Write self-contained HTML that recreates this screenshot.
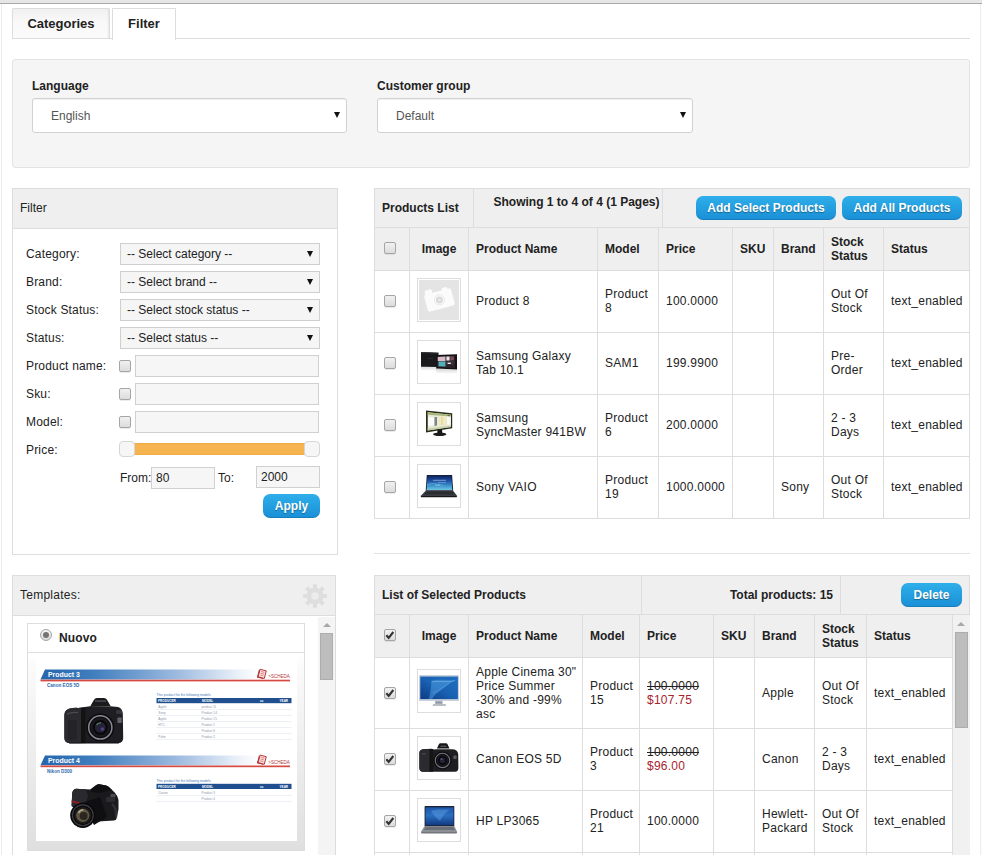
<!DOCTYPE html>
<html>
<head>
<meta charset="utf-8">
<title>Filter</title>
<style>
*{box-sizing:border-box;margin:0;padding:0}
html,body{width:982px;height:855px;overflow:hidden;background:#fff}
body{font-family:"Liberation Sans",sans-serif;font-size:12px;color:#222;position:relative}
.abs{position:absolute}
.topbar{left:0;top:0;width:982px;height:3px;background:#e6e6e6}
.topline{left:0;top:3px;width:982px;height:1px;background:#a9a9a9}
.leftbar{left:1px;top:4px;width:1px;height:851px;background:#ececec}
.rightbar{left:980px;top:4px;width:2px;height:851px;background:#fcfcfc;border-left:1px solid #eeeeee}
/* tabs */
.tab{top:8px;height:31px;border:1px solid #ddd;border-bottom:none;border-radius:1px 1px 0 0;font-weight:bold;font-size:13px;color:#222;text-align:center;line-height:29px}
.tab.cat{left:12px;width:98px;background:linear-gradient(#f0f0f0,#f8f8f8 40%,#fbfbfb);box-shadow:inset -2px 0 2px -1px rgba(0,0,0,.07);border-bottom:1px solid #ddd;height:31px}
.tab.fil{left:112px;width:64px;background:#fff;height:32px}
.tabline{left:12px;top:38px;width:958px;height:1px;background:#ddd}
/* language panel */
.lpanel{left:12px;top:59px;width:958px;height:109px;background:#f5f5f5;border:1px solid #e3e3e3;border-radius:3px}
.lbl{font-weight:bold;font-size:12px;color:#222}
.bigsel{height:35px;width:315px;background:#fff;border:1px solid #d2d2d2;border-radius:3px;font-size:12px;color:#555;line-height:35px;padding-left:18px;box-shadow:inset 0 1px 1px rgba(0,0,0,.06)}
.arr{position:absolute;width:0;height:0;border-left:3px solid transparent;border-right:3px solid transparent;border-top:6px solid #111}
/* generic panel */
.panel{border:1px solid #ddd;background:#fff}
.phead{background:#efefef;border-bottom:1px solid #ddd}
/* filter rows */
.flabel{left:26px;font-size:12px;color:#222;line-height:14px;letter-spacing:.18px}
.fsel{left:120px;width:200px;height:22px;background:#f5f5f5;border:1px solid #cfcfcf;font-size:12px;line-height:20px;padding-left:6px;color:#222}
.finp{left:135px;width:184px;height:22px;background:#f6f6f6;border:1px solid #d0d0d0}
.cb{width:12px;height:12px;border:1px solid #a6a6a6;border-radius:2px;background:linear-gradient(#f1f1f1,#dcdcdc);box-shadow:0 1px 0 rgba(0,0,0,.08)}
.cb{position:relative}
.abs.cb{position:absolute}
.cb.ck svg{position:absolute;left:-1px;top:-1px;width:12px;height:12px}
th .cb{top:-1px}
.btn{background:linear-gradient(#2eafea,#1a8fd6);color:#fff;font-weight:bold;font-size:12px;text-align:center;border-radius:7px;text-shadow:0 1px 1px rgba(0,0,0,.35);box-shadow:inset 0 -1px 0 rgba(0,0,0,.12)}
/* tables */
table{border-collapse:collapse;table-layout:fixed;font-size:12px;color:#222}
td,th{border:1px solid #ddd;vertical-align:middle;text-align:left;padding:0 0 0 7px;line-height:14px;font-weight:normal}
td{padding-bottom:1px;letter-spacing:.25px}
tr.r71 td{padding-bottom:0}
th{background:#efefef;font-weight:bold}
.thumb{display:block;width:44px;height:44px;border:1px solid #ddd;padding:1px;background:#fff;position:absolute}
.thumb svg{display:block;width:40px;height:40px}
.old{text-decoration:line-through;color:#222}
.new{color:#a8232d}
</style>
</head>
<body>
<div class="abs topbar"></div><div class="abs topline"></div>
<div class="abs leftbar"></div><div class="abs rightbar"></div>

<!-- tabs -->
<div class="abs tabline"></div>
<div class="abs tab cat">Categories</div>
<div class="abs tab fil">Filter</div>

<!-- language panel -->
<div class="abs lpanel"></div>
<div class="abs lbl" style="left:32px;top:79px">Language</div>
<div class="abs bigsel" style="left:32px;top:98px">English</div>
<div class="arr" style="left:334px;top:112px"></div>
<div class="abs lbl" style="left:377px;top:79px">Customer group</div>
<div class="abs bigsel" style="left:377px;top:98px;width:316px">Default</div>
<div class="arr" style="left:680px;top:112px"></div>

<!-- FILTER PANEL -->
<div class="abs panel" style="left:12px;top:188px;width:326px;height:367px"></div>
<div class="abs phead" style="left:13px;top:189px;width:324px;height:40px"></div>
<div class="abs" style="left:20px;top:201px;font-size:12px">Filter</div>


<div class="abs flabel" style="top:247px">Category:</div>
<div class="abs fsel" style="top:243px">-- Select category --</div><div class="arr" style="left:307px;top:251px"></div>
<div class="abs flabel" style="top:275px">Brand:</div>
<div class="abs fsel" style="top:271px">-- Select brand --</div><div class="arr" style="left:307px;top:279px"></div>
<div class="abs flabel" style="top:303px">Stock Status:</div>
<div class="abs fsel" style="top:299px">-- Select stock status --</div><div class="arr" style="left:307px;top:307px"></div>
<div class="abs flabel" style="top:331px">Status:</div>
<div class="abs fsel" style="top:327px">-- Select status --</div><div class="arr" style="left:307px;top:335px"></div>
<div class="abs flabel" style="top:359px">Product name:</div>
<div class="abs cb" style="left:119px;top:360px"></div><div class="abs finp" style="top:355px"></div>
<div class="abs flabel" style="top:387px">Sku:</div>
<div class="abs cb" style="left:119px;top:388px"></div><div class="abs finp" style="top:383px"></div>
<div class="abs flabel" style="top:415px">Model:</div>
<div class="abs cb" style="left:119px;top:416px"></div><div class="abs finp" style="top:411px"></div>
<div class="abs flabel" style="top:443px">Price:</div>
<div class="abs" style="left:127px;top:443px;width:185px;height:12px;background:#f6b450;border-top:1px solid #f0ab45;border-bottom:1px solid #f0ab45"></div>
<div class="abs" style="left:119px;top:441px;width:16px;height:16px;border:1px solid #d6d6d6;border-radius:4px;background:#f6f6f6"></div>
<div class="abs" style="left:304px;top:441px;width:16px;height:16px;border:1px solid #d6d6d6;border-radius:4px;background:#f6f6f6"></div>
<div class="abs" style="left:120px;top:471px;font-size:12px">From:</div>
<div class="abs finp" style="left:151px;top:467px;width:64px;padding-left:4px;line-height:20px;font-size:12px">80</div>
<div class="abs" style="left:218px;top:471px;font-size:12px">To:</div>
<div class="abs finp" style="left:256px;top:466px;width:64px;padding-left:4px;line-height:20px;font-size:12px">2000</div>
<div class="abs btn" style="left:263px;top:494px;width:57px;height:24px;line-height:25px">Apply</div>


<!-- PRODUCTS LIST -->

<div class="abs phead" style="left:374px;top:188px;width:596px;height:40px;border:1px solid #ddd"></div>
<div class="abs" style="left:473px;top:189px;width:1px;height:38px;background:#ddd"></div>
<div class="abs" style="left:662px;top:189px;width:1px;height:38px;background:#ddd"></div>
<div class="abs" style="left:382px;top:201px;font-weight:bold">Products List</div>
<div class="abs" style="left:474px;top:195px;width:189px;text-align:center;font-weight:bold;padding-left:16px">Showing 1 to 4 of 4 (1 Pages)</div>
<div class="abs btn" style="left:696px;top:196px;width:140px;height:24px;line-height:25px">Add Select Products</div>
<div class="abs btn" style="left:842px;top:196px;width:120px;height:24px;line-height:25px">Add All Products</div>
<table class="abs" style="left:374px;top:227px;width:595px">
<colgroup><col style="width:35px"><col style="width:59px"><col style="width:129px"><col style="width:61px"><col style="width:74px"><col style="width:41px"><col style="width:50px"><col style="width:60px"><col style="width:86px"></colgroup>
<tr style="height:43px"><th style="padding-left:9px"><div class="cb"></div></th><th style="text-align:center;padding:0">Image</th><th>Product Name</th><th>Model</th><th>Price</th><th>SKU</th><th>Brand</th><th>Stock<br>Status</th><th>Status</th></tr>
<tr style="height:62px"><td style="padding-left:9px"><div class="cb"></div></td><td></td><td>Product 8</td><td>Product<br>8</td><td>100.0000</td><td></td><td></td><td>Out Of<br>Stock</td><td>text_enabled</td></tr>
<tr style="height:62px"><td style="padding-left:9px"><div class="cb"></div></td><td></td><td>Samsung Galaxy<br>Tab 10.1</td><td>SAM1</td><td>199.9900</td><td></td><td></td><td>Pre-<br>Order</td><td>text_enabled</td></tr>
<tr style="height:62px"><td style="padding-left:9px"><div class="cb"></div></td><td></td><td>Samsung<br>SyncMaster 941BW</td><td>Product<br>6</td><td>200.0000</td><td></td><td></td><td>2 - 3<br>Days</td><td>text_enabled</td></tr>
<tr style="height:62px"><td style="padding-left:9px"><div class="cb"></div></td><td></td><td>Sony VAIO</td><td>Product<br>19</td><td>1000.0000</td><td></td><td>Sony</td><td>Out Of<br>Stock</td><td>text_enabled</td></tr>
</table>
<div class="thumb" style="left:417px;top:278px"><svg viewBox="0 0 40 40"><rect width="40" height="40" fill="#e4e4e4"/>
<g transform="rotate(-15.3 20.4 19.9)" fill="#fbfbfb">
<rect x="6.5" y="11.2" width="27.8" height="17.6" rx="2.2"/>
<rect x="8.3" y="7.2" width="7.2" height="5" rx="1.4"/>
<rect x="25.5" y="9.3" width="5.4" height="2.4" rx=".8"/>
</g>
<circle cx="20.4" cy="19.9" r="6.4" fill="#fdfdfd"/>
<circle cx="20.4" cy="19.9" r="5.1" fill="none" stroke="#e2e2e2" stroke-width=".9"/>
<circle cx="20.4" cy="19.9" r="3.5" fill="#d9d9d9"/>
<circle cx="20.4" cy="19.9" r="1.4" fill="#ebebeb"/></svg></div>
<div class="thumb" style="left:417px;top:340px"><svg viewBox="0 0 40 40"><rect width="40" height="40" fill="#fff"/><defs><linearGradient id="rf" x1="0" x2="0" y1="0" y2="1"><stop offset="0" stop-color="#c9c9c9"/><stop offset="1" stop-color="#fff"/></linearGradient></defs>
<path d="M2 25 L19 25.2 L19 29 L2 28Z" fill="url(#rf)" opacity=".7"/>
<path d="M17.2 26.6 L38 27.8 L38 32 L17.2 31Z" fill="url(#rf)" opacity=".8"/>
<path d="M2 10.6 Q2 10 2.8 10 L19.5 10.7 L19.5 25 L2 24.8Z" fill="#19191c"/>
<path d="M2 10.6 Q2 10 2.8 10 L19.5 10.7 L19.5 11.6 L2 11.2Z" fill="#35353a"/>
<path d="M9 16.5 h5" stroke="#3e3e44" stroke-width=".5"/>
<path d="M17.2 13 L38 12.3 L38 27.6 L17.2 26.5Z" fill="#131316"/>
<path d="M18.5 14.5 L35.6 13.9 L35.6 25.7 L18.5 25Z" fill="#3b2e38"/>
<path d="M18.8 14.9 L26.4 14.6 L26.4 19 L18.8 19.1Z" fill="#d9bcc6"/>
<path d="M19.6 19.6 L26.4 19.5 L26.4 24.6 L19.6 24.3Z" fill="#52b0ba"/>
<path d="M27.4 14.6 L30.6 14.5 L30.6 18.4 L27.4 18.5Z" fill="#e9e4e6"/>
<path d="M31.4 14.5 L34.8 14.4 L34.8 18 L31.4 18.2Z" fill="#7d4a55"/>
<path d="M28.6 20.6 L31.8 20.6 L31.8 22 L28.6 22Z" fill="#ede9e9"/>
<path d="M27.2 22.8 L35 23 L35 25 L27.2 24.6Z" fill="#2a2028"/></svg></div>
<div class="thumb" style="left:417px;top:402px"><svg viewBox="0 0 40 40"><rect width="40" height="40" fill="#fff"/><path d="M7 6.4 L33.2 9.2 L33.2 24.2 L7 28.4Z" fill="#272d18"/>
<path d="M8.7 8.2 L32 10.7 L32 23 L8.7 26.6Z" fill="#e8ead9"/>
<path d="M8.7 8.2 L32 10.7 L32 12.6 L8.7 10.8Z" fill="#a9b67e"/>
<path d="M9.2 13.2 L15.2 13.4 L15.2 21.3 L9.2 22Z" fill="#fbfbfb"/>
<path d="M15.5 12.9 L18 13 L18 21.6 L15.5 21.9Z" fill="#7e8686"/>
<path d="M19.6 12.4 L27.4 12.8 L27.4 21 L19.6 21.4Z" fill="#f3e9bf"/>
<path d="M22.5 13 L23.5 13 L23.5 21 L22.5 21.1Z" fill="#d9cf9a"/>
<path d="M28 12.6 L31.4 12.8 L31.4 20.4 L28 20.8Z" fill="#fafafa"/>
<path d="M28.5 11.3 L31 11.5 L31 12.3 L28.5 12.1Z" fill="#40482a"/>
<path d="M8.7 24.6 L32 21.6 L32 23 L8.7 26.6Z" fill="#c8d0a8"/>
<path d="M18.5 26.2 L23 25.6 L23.4 29.4 L18.2 29.4Z" fill="#151515"/>
<ellipse cx="20.7" cy="30.3" rx="6.6" ry="1.8" fill="#1b1b1b"/></svg></div>
<div class="thumb" style="left:417px;top:464px"><svg viewBox="0 0 40 40"><rect width="40" height="40" fill="#fff"/><defs><linearGradient id="vg" x1="0" x2="0" y1="0" y2="1"><stop offset="0" stop-color="#0f245c"/><stop offset=".35" stop-color="#1c4fa5"/><stop offset=".7" stop-color="#3b93cf"/><stop offset="1" stop-color="#6fc5e0"/></linearGradient></defs>
<path d="M7.8 8.9 L33.1 8.9 L34.2 24.8 L6.7 24.8Z" fill="#1a2030"/>
<path d="M8.5 9.8 L32.4 9.8 L33.2 23.9 L7.6 23.9Z" fill="url(#vg)"/>
<path d="M14 14.3 H27" stroke="#cfe3f5" stroke-width=".7" opacity=".75"/>
<path d="M19 16.5 H27" stroke="#cfe3f5" stroke-width=".6" opacity=".55"/>
<path d="M7.7 19 C13 16.6 19 18 24 19.6" stroke="#7fd0ea" stroke-width=".8" fill="none" opacity=".6"/>
<path d="M16 19.2 H21" stroke="#e6f3fb" stroke-width=".6" opacity=".7"/>
<path d="M6.7 24.8 L34.2 24.8 L38.2 30 L1.6 30Z" fill="#3a3d42"/>
<path d="M7.6 25.4 L33.2 25.4 L35.4 28.4 L5.2 28.4Z" fill="#2a2c31"/>
<path d="M1.6 30 L38.2 30 L37.6 31.2 L2.2 31.2Z" fill="#17181b"/></svg></div>


<!-- hr -->
<div class="abs" style="left:374px;top:553px;width:596px;height:1px;background:#e2e2e2"></div>

<!-- TEMPLATES -->

<div class="abs panel" style="left:12px;top:575px;width:324px;height:290px"></div>
<div class="abs phead" style="left:13px;top:576px;width:322px;height:40px"></div>
<div class="abs" style="left:20px;top:588px;font-size:12px;letter-spacing:.25px">Templates:</div>
<svg class="abs" style="left:303px;top:584px" width="24" height="24" viewBox="0 0 24 24"><path d="M23.82 9.94 L23.82 14.06 L20.36 14.01 L19.33 16.49 L21.82 18.90 L18.90 21.82 L16.49 19.33 L14.01 20.36 L14.06 23.82 L9.94 23.82 L9.99 20.36 L7.51 19.33 L5.10 21.82 L2.18 18.90 L4.67 16.49 L3.64 14.01 L0.18 14.06 L0.18 9.94 L3.64 9.99 L4.67 7.51 L2.18 5.10 L5.10 2.18 L7.51 4.67 L9.99 3.64 L9.94 0.18 L14.06 0.18 L14.01 3.64 L16.49 4.67 L18.90 2.18 L21.82 5.10 L19.33 7.51 L20.36 9.99Z" fill="#dedede"/><circle cx="12" cy="12" r="3.8" fill="#ececec"/></svg>
<!-- card -->
<div class="abs" style="left:27px;top:623px;width:278px;height:228px;border:1px solid #ddd;background:linear-gradient(#fff 30px,#fafafa 45px,#dfdfdf 100%)"></div>
<div class="abs" style="left:28px;top:624px;width:276px;height:29px;background:#fff;border-bottom:1px solid #ddd"></div>
<div class="abs" style="left:40px;top:629px;width:12px;height:12px;border-radius:50%;border:1px solid #a5a5a5;background:linear-gradient(#f6f6f6,#d8d8d8)"></div>
<div class="abs" style="left:43px;top:632px;width:6px;height:6px;border-radius:50%;background:#747474"></div>
<div class="abs" style="left:59px;top:631px;font-size:12px;font-weight:bold;letter-spacing:.1px">Nuovo</div>
<svg class="abs" style="left:36px;top:653px;background:#fff" width="261" height="188" viewBox="0 0 261 188" font-family="Liberation Sans, sans-serif">
<defs><linearGradient id="bg1" x1="0" x2="1" y1="0" y2="0"><stop offset="0" stop-color="#2466ae"/><stop offset=".2" stop-color="#3d7cbd"/><stop offset=".55" stop-color="#9ebbe0"/><stop offset=".8" stop-color="#eef3fa"/><stop offset=".88" stop-color="#fff"/></linearGradient></defs>

<path d="M9 16.6 H254.5 V26.400000000000002 H4.5Z" fill="url(#bg1)"/>
<rect x="4.5" y="26.700000000000003" width="249.5" height="1.7" fill="#d64a42"/>
<text x="12" y="24.200000000000003" font-size="6.9" font-weight="bold" fill="#fff">Product 3</text>
<text x="11" y="34.2" font-size="4.6" font-weight="bold" fill="#2f68ad">Canon EOS 5D</text>
<g transform="rotate(15 226 20.8)"><rect x="222" y="17.8" width="6.4" height="7.8" fill="#a82626"/><rect x="223" y="16.900000000000002" width="6.4" height="7.8" fill="#f7e4e4" stroke="#b83232" stroke-width=".9"/><path d="M224.6 18.8 h3.2 M224.6 20.6 h3.2 M224.6 22.400000000000002 h3.2" stroke="#d66" stroke-width=".7"/></g>
<text x="232.3" y="24.700000000000003" font-size="4.5" fill="#b5363a">&gt;SCHEDA</text>
<text x="120.5" y="43.2" font-size="3.3" fill="#4a78b8">This product fits the following models</text>
<rect x="120.5" y="45.0" width="135" height="5.2" fill="#1f4f8f"/>
<text x="122" y="49.0" font-size="3.1" font-weight="bold" fill="#fff">PRODUCER</text>
<text x="166" y="49.0" font-size="3.1" font-weight="bold" fill="#fff">MODEL</text>
<text x="224" y="49.0" font-size="3.1" font-weight="bold" fill="#fff">cc</text>
<text x="243.5" y="49.0" font-size="3.1" font-weight="bold" fill="#fff">YEAR</text>
<text x="122.3" y="54.8" font-size="3.2" fill="#8d97a8">Apple</text><text x="165.5" y="54.8" font-size="3.2" fill="#8d97a8">product 11</text><rect x="120.5" y="56.5" width="135" height=".5" fill="#dbe3ec"/><text x="122.3" y="60.8" font-size="3.2" fill="#8d97a8">Sony</text><text x="165.5" y="60.8" font-size="3.2" fill="#8d97a8">Product 14</text><rect x="120.5" y="62.5" width="135" height=".5" fill="#dbe3ec"/><text x="122.3" y="66.7" font-size="3.2" fill="#8d97a8">Apple</text><text x="165.5" y="66.7" font-size="3.2" fill="#8d97a8">Product 15</text><rect x="120.5" y="68.4" width="135" height=".5" fill="#dbe3ec"/><text x="122.3" y="72.7" font-size="3.2" fill="#8d97a8">HTC</text><text x="165.5" y="72.7" font-size="3.2" fill="#8d97a8">Product 1</text><rect x="120.5" y="74.4" width="135" height=".5" fill="#dbe3ec"/><text x="165.5" y="78.6" font-size="3.2" fill="#8d97a8">Product 6</text><rect x="120.5" y="80.3" width="135" height=".5" fill="#dbe3ec"/><text x="122.3" y="84.6" font-size="3.2" fill="#8d97a8">Palm</text><text x="165.5" y="84.6" font-size="3.2" fill="#8d97a8">Product 2</text><rect x="120.5" y="86.3" width="135" height=".5" fill="#dbe3ec"/>
<g transform="translate(28,45.1)">
<path d="M26 8.6 L30 1.6 Q31 0 33 0 H40 Q42 0 43 1.6 L46.6 8Z" fill="#1b1b1e"/>
<path d="M.4 17 Q.6 12 5 10.6 Q9 9.6 14 9.8 L26 8.2 H46.4 L54 9 Q58 10 58.8 15 L59.2 40 Q59.2 45 54 45.2 H6 Q.4 45 .4 40Z" fill="#1e1e22"/>
<path d="M.4 17 Q.6 12 5 10.6 Q9 9.6 14 9.8 L17 9.6 V45.2 H6 Q.4 45 .4 40Z" fill="#2a2a2f"/>
<path d="M17 9.6 H21.5 V45 H17Z" fill="#131316"/>
<path d="M3 16 Q8 13.5 14 14.5" stroke="#4b4b53" stroke-width="1.2" fill="none"/>
<rect x="4" y="22" width="9" height="20" rx="3" fill="#242428"/>
<rect x="52" y="12" width="6" height="4" rx="1.2" fill="#35353b"/>
<rect x="53.4" y="19.5" width="4.4" height="5.5" rx=".8" fill="#606068"/>
<path d="M31 3 H42" stroke="#4a4a52" stroke-width="1.6"/>
<circle cx="36.3" cy="29.3" r="14" fill="#0d0d10"/>
<circle cx="36.3" cy="29.3" r="11.6" fill="none" stroke="#8a8a93" stroke-width="1.5"/>
<circle cx="36.3" cy="29.3" r="9.8" fill="#19191e"/>
<circle cx="36.3" cy="29.3" r="7.4" fill="#08080b"/>
<circle cx="36.3" cy="29.3" r="5.4" fill="#252238"/>
<path d="M32.6 27 A4.4 4.4 0 0 1 37 24.8" stroke="#4e7a5a" stroke-width="1.3" fill="none"/>
<circle cx="38.4" cy="31" r="1.8" fill="#4b4480"/>
<path d="M5 45 H55" stroke="#000" stroke-width="1" opacity=".55"/>
</g>

<path d="M9 102.4 H254.5 V112.2 H4.5Z" fill="url(#bg1)"/>
<rect x="4.5" y="112.5" width="249.5" height="1.7" fill="#d64a42"/>
<text x="12" y="110.0" font-size="6.9" font-weight="bold" fill="#fff">Product 4</text>
<text x="11" y="120.0" font-size="4.6" font-weight="bold" fill="#2f68ad">Nikon D300</text>
<g transform="rotate(15 226 106.60000000000001)"><rect x="222" y="103.60000000000001" width="6.4" height="7.8" fill="#a82626"/><rect x="223" y="102.7" width="6.4" height="7.8" fill="#f7e4e4" stroke="#b83232" stroke-width=".9"/><path d="M224.6 104.60000000000001 h3.2 M224.6 106.4 h3.2 M224.6 108.2 h3.2" stroke="#d66" stroke-width=".7"/></g>
<text x="232.3" y="110.5" font-size="4.5" fill="#b5363a">&gt;SCHEDA</text>
<text x="120.5" y="129.0" font-size="3.3" fill="#4a78b8">This product fits the following models</text>
<rect x="120.5" y="130.8" width="135" height="5.2" fill="#1f4f8f"/>
<text x="122" y="134.8" font-size="3.1" font-weight="bold" fill="#fff">PRODUCER</text>
<text x="166" y="134.8" font-size="3.1" font-weight="bold" fill="#fff">MODEL</text>
<text x="224" y="134.8" font-size="3.1" font-weight="bold" fill="#fff">cc</text>
<text x="243.5" y="134.8" font-size="3.1" font-weight="bold" fill="#fff">YEAR</text>
<text x="122.3" y="140.6" font-size="3.2" fill="#8d97a8">Canon</text><text x="165.5" y="140.6" font-size="3.2" fill="#8d97a8">Product 3</text><rect x="120.5" y="142.3" width="135" height=".5" fill="#dbe3ec"/><text x="165.5" y="146.6" font-size="3.2" fill="#8d97a8">Product 4</text><rect x="120.5" y="148.2" width="135" height=".5" fill="#dbe3ec"/>
<g transform="translate(34,131)">
<path d="M2.2 9 Q3 5 6 4.7 L20.4 5.6 L26 1.2 Q27.5 0 29.5 .2 L36 1.4 Q38 1.8 39.4 3.4 L44.7 8.5 Q48 12 48.5 16 V25.2 L46.4 35 Q46 36.4 44 36.6 L28 37.4 L10 30 L1.6 22Z" fill="#1a1a1d"/>
<path d="M2.2 9 Q3 5 6 4.7 L16 5.4 L18 12 L14 26 L1.6 22Z" fill="#2a2a2e"/>
<path d="M20.4 5.6 L26 1.2 Q27.5 0 29.5 .2 L36 1.4 Q38 1.8 39.4 3.4 L42 6 L30 9 L22 8Z" fill="#101012"/>
<path d="M1.8 16.3 L10 18.4 L9.6 20.3 L1.6 18.2Z" fill="#8c1f24"/>
<rect x="40.4" y="10" width="5" height="3.4" rx=".8" fill="#4a4a52"/>
<rect x="36" y="13" width="9" height="5" rx="1" fill="#2b2b30"/>
<path d="M42 20 Q47 24 46 33" stroke="#2f2f35" stroke-width="2.4" fill="none"/>
<path d="M12 19 L30 13 L37 33 L24 41Z" fill="#0f0f12"/>
<circle cx="12.8" cy="31.3" r="12.6" fill="#0a0a0c"/>
<circle cx="12.8" cy="31.3" r="10.4" fill="none" stroke="#3f3f45" stroke-width="1.1"/>
<circle cx="12.8" cy="31.3" r="8.6" fill="#1c1b19"/>
<circle cx="12.8" cy="31.3" r="6.6" fill="#5f5846"/>
<circle cx="13.6" cy="32" r="4" fill="#2a251d"/>
<path d="M8.6 29 A5.4 5.4 0 0 1 13.4 25.8" stroke="#b0a78c" stroke-width="1.6" fill="none"/>
</g>
</svg>
<!-- scrollbar -->
<div class="abs" style="left:318px;top:617px;width:17px;height:240px;background:#f4f4f4"></div>
<div class="abs" style="left:320px;top:633px;width:13px;height:47px;background:#bdbdbd;border:1px solid #adadad"></div>
<div class="abs" style="left:323px;top:623px;width:0;height:0;border-left:4px solid transparent;border-right:4px solid transparent;border-bottom:4px solid #a8a8a8"></div>


<!-- SELECTED -->

<div class="abs phead" style="left:374px;top:575px;width:596px;height:40px;border:1px solid #ddd"></div>
<div class="abs" style="left:641px;top:576px;width:1px;height:38px;background:#ddd"></div>
<div class="abs" style="left:840px;top:576px;width:1px;height:38px;background:#ddd"></div>
<div class="abs" style="left:382px;top:588px;font-weight:bold">List of Selected Products</div>
<div class="abs" style="left:642px;top:588px;width:191px;text-align:right;font-weight:bold">Total products: 15</div>
<div class="abs btn" style="left:901px;top:583px;width:61px;height:24px;line-height:25px">Delete</div>
<table class="abs" style="left:374px;top:614px;width:578px">
<colgroup><col style="width:35px"><col style="width:59px"><col style="width:114px"><col style="width:57px"><col style="width:74px"><col style="width:41px"><col style="width:60px"><col style="width:52px"><col style="width:86px"></colgroup>
<tr style="height:43px"><th style="padding-left:9px"><div class="cb ck"><svg viewBox="0 0 12 12"><path d="M2.3 6.2 L4.7 8.8 L9.3 3" stroke="#333" stroke-width="2.1" fill="none"/></svg></div></th><th style="text-align:center;padding:0">Image</th><th>Product Name</th><th>Model</th><th>Price</th><th>SKU</th><th>Brand</th><th>Stock<br>Status</th><th>Status</th></tr>
<tr class="r71" style="height:71px"><td style="padding-left:9px"><div class="cb ck"><svg viewBox="0 0 12 12"><path d="M2.3 6.2 L4.7 8.8 L9.3 3" stroke="#333" stroke-width="2.1" fill="none"/></svg></div></td><td></td><td>Apple Cinema 30"<br>Price Summer<br>-30% and -99%<br>asc</td><td>Product<br>15</td><td><span class="old">100.0000</span><br><span class="new">$107.75</span></td><td></td><td>Apple</td><td>Out Of<br>Stock</td><td>text_enabled</td></tr>
<tr style="height:62px"><td style="padding-left:9px"><div class="cb ck"><svg viewBox="0 0 12 12"><path d="M2.3 6.2 L4.7 8.8 L9.3 3" stroke="#333" stroke-width="2.1" fill="none"/></svg></div></td><td></td><td>Canon EOS 5D</td><td>Product<br>3</td><td><span class="old">100.0000</span><br><span class="new">$96.00</span></td><td></td><td>Canon</td><td>2 - 3<br>Days</td><td>text_enabled</td></tr>
<tr style="height:62px"><td style="padding-left:9px"><div class="cb ck"><svg viewBox="0 0 12 12"><path d="M2.3 6.2 L4.7 8.8 L9.3 3" stroke="#333" stroke-width="2.1" fill="none"/></svg></div></td><td></td><td>HP LP3065</td><td>Product<br>21</td><td>100.0000</td><td></td><td>Hewlett-<br>Packard</td><td>Out Of<br>Stock</td><td>text_enabled</td></tr>
<tr style="height:62px"><td></td><td></td><td></td><td></td><td></td><td></td><td></td><td></td><td></td></tr>
</table>
<div class="thumb" style="left:417px;top:669px"><svg viewBox="0 0 40 40"><rect width="40" height="40" fill="#fff"/><defs><linearGradient id="cg" x1="0" x2="1" y1="1" y2="0"><stop offset="0" stop-color="#0c3a85"/><stop offset=".5" stop-color="#1a62b3"/><stop offset="1" stop-color="#1f6fc0"/></linearGradient></defs>
<rect x=".2" y="4.2" width="39.6" height="25.6" rx=".6" fill="#b9c4d2"/>
<rect x="1.3" y="5.6" width="37.6" height="22.7" fill="url(#cg)"/>
<path d="M12 10 C20 7.5 30 10 36 9 C30 13 24 17 18 22 C16 24 14 26 13 28.3 L10 28.3 C11 22 13 14 12 10Z" fill="#4d9ade" opacity=".55"/>
<path d="M13 11 C21 9.5 29 12 36 9.5" stroke="#8fc4ee" stroke-width=".7" fill="none" opacity=".7"/>
<path d="M14 22 C20 20 25 16 30 12" stroke="#6fb0e8" stroke-width=".7" fill="none" opacity=".6"/>
<rect x=".2" y="28.3" width="39.6" height="1.5" fill="#c9d1db"/>
<path d="M16 29.8 H23.6 L23.8 33 H15.8Z" fill="#b4bbc4"/>
<path d="M17 30.6 H22.6 V32.4 H17Z" fill="#8e96a2"/>
<path d="M14 33.3 H26.6 L27 34.8 H13.6Z" fill="#a2a8b0"/></svg></div>
<div class="thumb" style="left:417px;top:736px"><svg viewBox="0 0 40 40"><rect width="40" height="40" fill="#fff"/><path d="M17.9 10.4 L20 5.9 Q20.4 5.2 21.4 5.2 H27 Q28 5.2 28.4 6 L30.5 10.4Z" fill="#17171a"/>
<path d="M.4 15 Q.4 11.6 4 11.2 L12 10.8 Q14 10.8 15 11.6 L17 11.2 H33 Q38.6 11.4 39.2 16 L39.4 30 Q39.4 33.6 36 33.7 H4 Q.4 33.6 .4 30Z" fill="#1e1e22"/>
<path d="M.4 15 Q.4 11.6 4 11.2 L10.5 10.9 V33.7 H4 Q.4 33.6 .4 30Z" fill="#2a2a2f"/>
<path d="M10.5 11 H14 V33.7 H10.5Z" fill="#141417"/>
<rect x="2.6" y="15.2" width="4.6" height="1.4" rx=".7" fill="#47474e"/>
<rect x="34.4" y="17.5" width="3.2" height="3.6" rx=".6" fill="#5a5a62"/>
<path d="M21.5 8.2 H27.5" stroke="#6f6f77" stroke-width=".9"/>
<circle cx="23.5" cy="22.4" r="9" fill="#0c0c0f"/>
<circle cx="23.5" cy="22.4" r="7.2" fill="none" stroke="#74747d" stroke-width="1.1"/>
<circle cx="23.5" cy="22.4" r="5.8" fill="#1a1a1f"/>
<circle cx="23.5" cy="22.4" r="4.4" fill="#07070a"/>
<circle cx="23.5" cy="22.4" r="2.8" fill="#242238"/>
<circle cx="22.5" cy="21.3" r="1" fill="#55527a"/></svg></div>
<div class="thumb" style="left:417px;top:798px"><svg viewBox="0 0 40 40"><rect width="40" height="40" fill="#fff"/><defs><linearGradient id="hg" x1="0" x2="0" y1="0" y2="1"><stop offset="0" stop-color="#1d56a6"/><stop offset=".45" stop-color="#2b6fc2"/><stop offset="1" stop-color="#123a80"/></linearGradient></defs>
<path d="M5.6 6.8 Q5.6 6.1 6.4 6.1 H34.5 Q35.3 6.1 35.3 6.8 V26.1 H5.6Z" fill="#1a2233"/>
<rect x="6.5" y="7.3" width="28" height="17.9" fill="url(#hg)"/>
<path d="M12 11 C18 8.6 26 10 31 9.5 C27 12.5 23 16 21 21 C18 18 14 15 12 11Z" fill="#5a9be0" opacity=".5"/>
<path d="M5.6 26.1 H35.3 L38.2 32 H1.9Z" fill="#8c8f95"/>
<path d="M6.6 26.8 H34.3 L35.8 30 H5Z" fill="#6c6f75"/>
<path d="M1.9 32 H38.2 L37.6 33.4 H2.5Z" fill="#74777d"/></svg></div>
<!-- scrollbar -->
<div class="abs" style="left:953px;top:615px;width:17px;height:240px;background:#f1f1f1"></div>
<div class="abs" style="left:955px;top:632px;width:13px;height:96px;background:#bdbdbd;border:1px solid #adadad"></div>
<div class="abs" style="left:957px;top:622px;width:0;height:0;border-left:4px solid transparent;border-right:4px solid transparent;border-bottom:4px solid #a8a8a8"></div>


</body>
</html>
